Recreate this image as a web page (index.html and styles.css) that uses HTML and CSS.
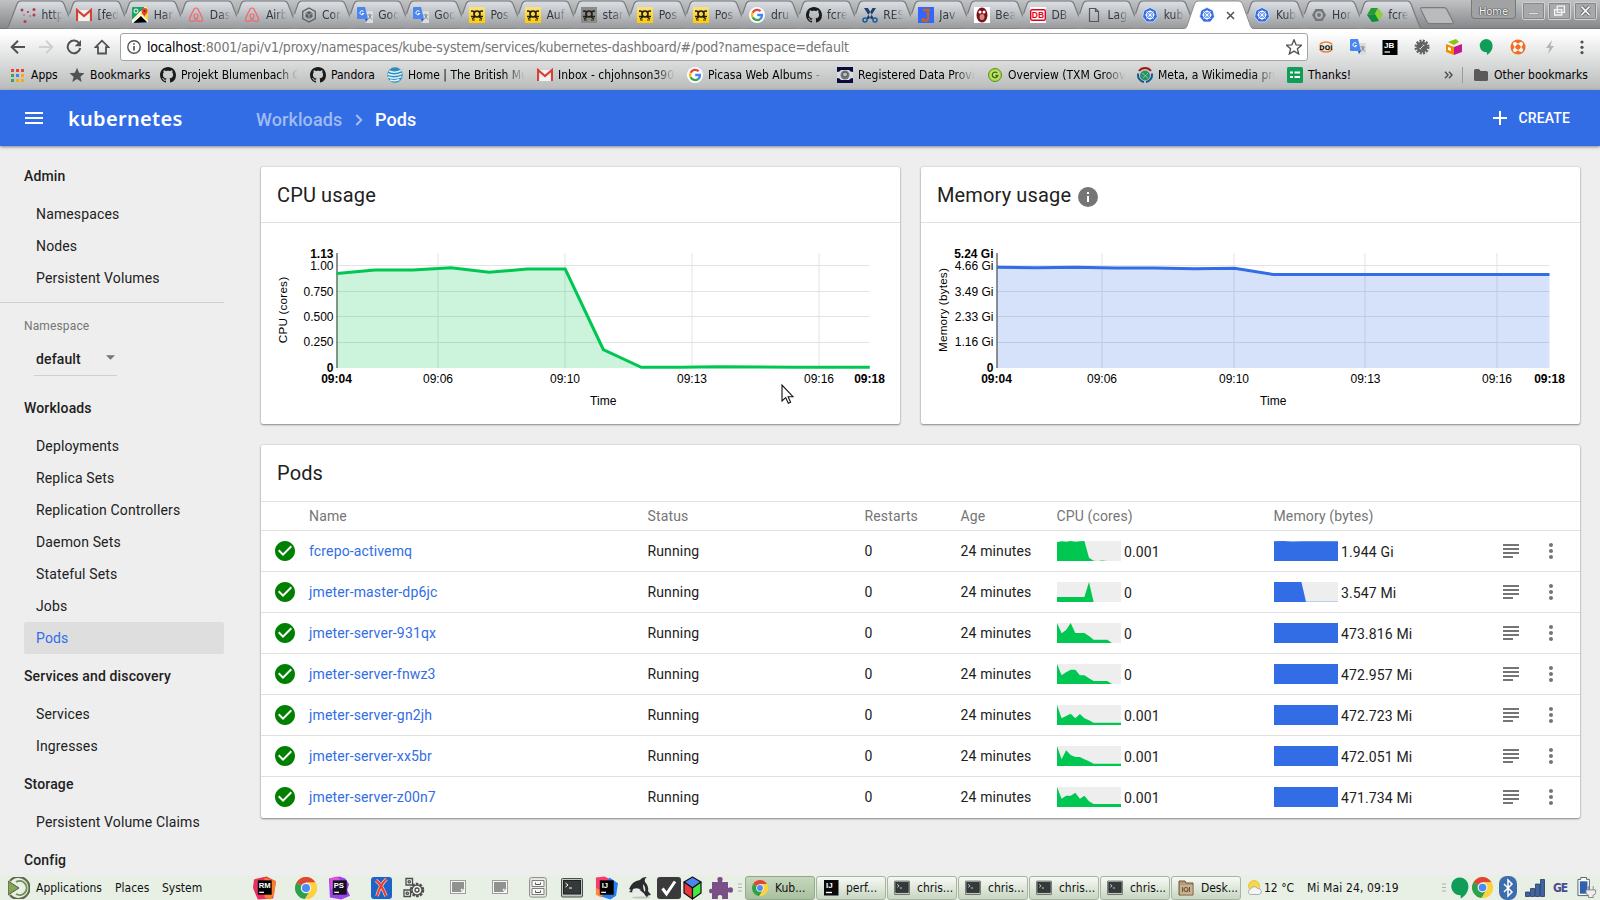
FILE: index.html
```html
<!DOCTYPE html>
<html lang="en">
<head>
<meta charset="utf-8">
<title>Pods - Kubernetes Dashboard</title>
<link rel="stylesheet" href="styles.css">
</head>
<body>
<svg class="defs" width="0" height="0">
  <defs>
    <linearGradient id="gTab" x1="0" y1="0" x2="0" y2="1"><stop offset="0" stop-color="#d6dade"/><stop offset=".1" stop-color="#d6dadf"/><stop offset="1" stop-color="#97999b"/></linearGradient>
    <linearGradient id="gDhl" x1="0" y1="0" x2="0" y2="1"><stop offset="0" stop-color="#fbe27c"/><stop offset="1" stop-color="#fc0"/></linearGradient>
  </defs>
  <symbol id="tab" viewBox="0 0 70 29"><path d="M7 15 L11 4 Q12 1 15 1 H54 Q57 1 58 4 L66.500 26 Q67.500 28.500 70 28.500 H3.500Z" fill="url(#gTab)"/><path d="M7.500 14 L11 4 Q12 1 15 1 H54 Q57 1 58 4 L66.500 26 Q67.500 28.500 70 28.500" fill="none" stroke="#797b7d" stroke-width="1.200"/></symbol>
  <symbol id="tab-first" viewBox="0 0 70 29"><path d="M0 28.500 Q2 28 3 25 L11 4 Q12 1 15 1 H54 Q57 1 58 4 L66.500 26 Q67.500 28.500 70 28.500" fill="url(#gTab)" stroke="#797b7d" stroke-width="1.200"/></symbol>
  <symbol id="tab-active" viewBox="0 0 70 29"><path d="M0 29 Q2 28.500 3 26 L10.500 4 Q11.500 1 14 1 H54.500 Q57.500 1 58.500 4 L66.500 26 Q67.500 28.500 69.500 29" fill="#fff" stroke="#8c8e90"/></symbol>
  <symbol id="dots" viewBox="0 0 16 16"><g fill="#b8384a"><circle cx="2" cy="3" r="1.500"/><circle cx="8" cy="5" r="1.100"/><circle cx="14" cy="2.500" r="1.500"/><circle cx="14" cy="8" r="1.500"/><circle cx="5" cy="14.500" r="1.500"/><circle cx="10" cy="9" r=".7"/><circle cx="4" cy="8" r=".7"/></g></symbol>
  <symbol id="gmail" viewBox="0 0 16 16"><path d="M1 3h14v11H1z" fill="#f2f2f2"/><path d="M1 14V3l7 6 7-6v11" fill="none" stroke="#d93f32" stroke-width="2.200"/></symbol>
  <symbol id="maps" viewBox="0 0 16 16"><rect width="16" height="16" rx="1" fill="#1ea362"/><path d="M0 13L13 0h3v16H0z" fill="#fdd835"/><path d="M3 16l6-6 7 6z" fill="#4285f4"/><path d="M0 14L14 0M0 16l9-8 7 7" stroke="#fff" stroke-width="1.500"/><path d="M12.500 10c0-2-3-3-3-6a3 3 0 0 1 6 0c0 3-3 4-3 6z" fill="#db4437"/><circle cx="12.500" cy="4" r="1" fill="#7b231e"/><circle cx="4" cy="4" r="2" fill="none" stroke="#fff"/></symbol>
  <symbol id="airbnb" viewBox="0 0 16 16"><path d="M8 12.500C5 9.500 5.500 7 8 7s3 2.500 0 5.500c-3 3-6.800 2.500-6.500-.5C1.700 10.500 6 2 6.500 1.500 7 .8 9 .8 9.500 1.500 10 2 14.300 10.500 14.500 12c.3 3-3.500 3.500-6.500.5z" fill="none" stroke="#f4676b" stroke-width="1.200"/></symbol>
  <symbol id="hexgrey" viewBox="0 0 16 16"><path d="M8 1l6.300 3.500v7L8 15l-6.300-3.500v-7z" fill="none" stroke="#5c5f61" stroke-width="1.300"/><path d="M8 4l3.500 2v4L8 12l-3.500-2V6z" fill="#5c5f61"/><path d="M4.500 6L8 8l3.500-2M8 8v4" stroke="#bbb" stroke-width=".7" fill="none"/></symbol>
  <symbol id="gtrans" viewBox="0 0 16 16"><path d="M6 4h10v12H9z" fill="#dcdcdc"/><path d="M0 1q0-1 1-1h7l3 12H1q-1 0-1-1z" fill="#4a86ef"/><path d="M8 12h3l-2 3z" fill="#2257c4"/><path d="M6.500 4.500a2 2 0 1 0 .3 2H5" fill="none" stroke="#fff"/><path d="M10.500 8h4M12.500 7v1M14 8q-.5 3-3 4M12 9l3 3.500" fill="none" stroke="#687b8a" stroke-width=".8"/></symbol>
  <symbol id="horn" viewBox="0 0 16 16"><path d="M2 4.200Q5 3.500 6 6M14 4.200Q11 3.500 10 6M2 9.500h4M10 9.500h4M6 10l-3 2M10 10l3 2" stroke="#231f12" stroke-width="1.400" fill="none"/><circle cx="8" cy="7" r="3" fill="none" stroke="#231f12" stroke-width="1.700"/><path d="M3 13h3M10 13h3" stroke="#231f12" stroke-width=".9"/></symbol>
  <symbol id="dhl" viewBox="0 0 16 16"><rect width="16" height="16" fill="url(#gDhl)"/><use href="#horn"/></symbol>
  <symbol id="dhlgrey" viewBox="0 0 16 16"><rect width="16" height="16" fill="#8b8b8b"/><use href="#horn"/></symbol>
  <symbol id="google" viewBox="0 0 16 16"><circle cx="8" cy="8" r="8" fill="#fff"/><g fill="none" stroke-width="2.300"><path d="M11.600 4.200A5 5 0 0 0 3.600 5.700" stroke="#ea4335"/><path d="M3.600 5.700a5 5 0 0 0 0 4.600" stroke="#fbbc05"/><path d="M3.600 10.300a5 5 0 0 0 7.800 1.500" stroke="#34a853"/><path d="M11.400 11.800A5 5 0 0 0 13 8H8.200" stroke="#4285f4"/></g></symbol>
  <symbol id="github" viewBox="0 0 16 16"><path fill="#1b1b1b" d="M8 0C3.580 0 0 3.580 0 8c0 3.540 2.290 6.530 5.470 7.590.4.070.55-.17.55-.38 0-.19-.01-.82-.01-1.490-2.010.37-2.530-.49-2.690-.94-.09-.23-.48-.94-.82-1.130-.28-.15-.68-.52-.01-.53.63-.01 1.080.58 1.230.82.72 1.210 1.870.87 2.330.66.07-.52.28-.87.51-1.070-1.780-.2-3.640-.89-3.640-3.950 0-.87.31-1.590.82-2.150-.08-.2-.36-1.020.08-2.120 0 0 .67-.21 2.200.82.64-.18 1.320-.27 2-.27s1.360.09 2 .27c1.530-1.040 2.200-.82 2.200-.82.44 1.100.16 1.920.08 2.120.51.56.82 1.270.82 2.150 0 3.070-1.870 3.750-3.650 3.950.29.25.54.73.54 1.480 0 1.070-.01 1.930-.01 2.200 0 .21.15.46.55.38A8.010 8.010 0 0 0 16 8c0-4.420-3.580-8-8-8z"/></symbol>
  <symbol id="scissors" viewBox="0 0 16 16"><path d="M2 1h4l6 11H9zM14 1h-3.500L4 12h3z" fill="#1c3f6e"/><g fill="none" stroke="#1c5c9c" stroke-width="1.500"><circle cx="3" cy="13" r="2"/><circle cx="13" cy="13" r="2"/></g></symbol>
  <symbol id="java" viewBox="0 0 16 16"><rect width="16" height="16" fill="#36f"/><path d="M5 3h7M10 3v9q0 1.500-1.500 1.500H5V11" stroke="#c9641e" stroke-width="2.400" fill="none"/></symbol>
  <symbol id="bean" viewBox="0 0 16 16"><rect width="16" height="16" fill="#fff"/><ellipse cx="8" cy="8" rx="5.500" ry="7.500" fill="#7a1218"/><ellipse cx="8" cy="10" rx="2.500" ry="3" fill="#cf8b80"/><circle cx="6" cy="5" r="1.500" fill="#fff"/><circle cx="10" cy="5" r="1.500" fill="#fff"/></symbol>
  <symbol id="db" viewBox="0 0 16 16"><rect width="16" height="16" fill="#fff"/><rect x=".7" y="2.700" width="14.600" height="10.600" rx="1.500" fill="#fff" stroke="#e3001b" stroke-width="1.400"/><text x="8" y="11.200" text-anchor="middle" class="db-text">DB</text></symbol>
  <symbol id="page" viewBox="0 0 16 16"><path d="M3.500 1.500h6l3 3v10h-9zM9.500 1.500v3h3" fill="none" stroke="#55575a" stroke-width="1.200"/></symbol>
  <symbol id="kube" viewBox="0 0 16 16"><path d="M8 .5l5.900 2.900 1.500 6.400-4.100 5.100H4.700L.6 9.800l1.500-6.400z" fill="#326de6" stroke="#e9effb" stroke-width=".7"/><g fill="none" stroke="#fff"><circle cx="8" cy="8" r="3.600" stroke-width="1.100"/><path d="M8 3v10M3 8h10M4.400 4.400l7.200 7.200M11.600 4.400l-7.200 7.200" stroke-width=".8"/></g></symbol>
  <symbol id="hexhole" viewBox="0 0 16 16"><path d="M4.500 2h7L15 8l-3.500 6h-7L1 8z" fill="#747779"/><circle cx="8" cy="8" r="3.800" fill="#b7b9bb"/><circle cx="8" cy="8" r="2" fill="#747779"/></symbol>
  <symbol id="fedora" viewBox="0 0 16 16"><path d="M4 1l7 0-3 6-8 1z" fill="#2a9a35"/><path d="M11 1l5 6-4 7-4-7z" fill="#8bd03a"/><path d="M0 8l8-1 4 7-7 1z" fill="#0b8d3b"/></symbol>
  <symbol id="att" viewBox="0 0 16 16"><circle cx="8" cy="8" r="7.700" fill="#2d8cb9"/><g stroke="#dff1f8" fill="none" stroke-width="1.500"><path d="M2 4q6 2.500 12-.5M.8 7q7 2.500 14-.5M1 10q7 2.500 13.500-.5M3 13q5 1.500 9.500-.5"/></g></symbol>
  <symbol id="reg" viewBox="0 0 16 16"><rect width="16" height="16" fill="#0b0b3b"/><path d="M0 5q3 0 4-2h8q1 2 4 2v6q-3 0-4 2H4q-1-2-4-2z" fill="#d9dce0"/><circle cx="8" cy="8" r="4.500" fill="#777"/><circle cx="8" cy="7.500" r="2.500" fill="#bbb" stroke="#555"/></symbol>
  <symbol id="groovy" viewBox="0 0 16 16"><circle cx="8" cy="8" r="6.500" fill="#a5d63f" stroke="#5f8f1f"/><circle cx="8" cy="8" r="4.800" fill="#c4e670"/><path d="M10.300 6.200A2.800 2.800 0 1 0 10.800 8.500H8.300" fill="none" stroke="#426b12" stroke-width="1.400"/></symbol>
  <symbol id="meta" viewBox="0 0 16 16"><circle cx="8" cy="8.500" r="5" fill="#2d9168"/><path d="M5 6l6 5M6 11l5-5" stroke="#8bd3ac" stroke-width=".8"/><path d="M2 4a7.500 7.500 0 0 1 12 0" fill="none" stroke="#a3161a" stroke-width="2"/><path d="M1.200 6.500A7 7 0 0 0 7 15M14.800 6.500A7 7 0 0 1 9 15" fill="none" stroke="#0c5a93" stroke-width="2"/></symbol>
  <symbol id="sheet" viewBox="0 0 16 16"><rect width="16" height="16" rx="1.500" fill="#0f9d58"/><path d="M3 5.500h3M7.500 5.500H13M3 10h3M7.500 10H13" stroke="#fff" stroke-width="1.800"/></symbol>
  <symbol id="folder" viewBox="0 0 16 16"><path d="M1 3.500Q1 2 2.500 2H6l1.500 2h6Q15 4 15 5.500v7q0 1.500-1.500 1.500h-11Q1 14 1 12.500z" fill="#5a5a5a"/></symbol>
  <symbol id="star" viewBox="0 0 16 16"><path d="M8 .8l2.100 5 5.400.4-4.100 3.500 1.300 5.300L8 12.100 3.300 15l1.300-5.300L.5 6.200l5.400-.4z"/></symbol>
  <symbol id="appsgrid" viewBox="0 0 13 13"><path d="M0 0h3v3H0zM5 0h3v3H5zM10 0h3v3h-3z" fill="#ea4335"/><path d="M0 5h3v3H0zM0 10h3v3H0z" fill="#34a853"/><path d="M5 5h3v3H5z" fill="#4285f4"/><path d="M10 5h3v3h-3zM5 10h3v3H5zM10 10h3v3h-3z" fill="#fbab05"/></symbol>
  <symbol id="hangouts" viewBox="0 0 16 18"><path d="M8 0a7.500 7.500 0 0 1 7.500 7.500C15.500 12 13 15.500 9 18v-3A7.500 7.500 0 1 1 8 0z" fill="#0f9d58"/></symbol>
  <symbol id="chrome" viewBox="0 0 22 22"><circle cx="11" cy="11" r="11" fill="#fdd23c"/><path d="M11 11L1.500 5.500A11 11 0 0 1 20.500 5.500H11z" fill="#df4538"/><path d="M1.500 5.500A11 11 0 0 0 10 22l5-8.500-4-2.500z" fill="#2da14f"/><path d="M20.500 5.500H11v5.500l4 3-5 8A11 11 0 0 0 20.500 5.500z" fill="#fdd23c"/><circle cx="11" cy="11" r="5.200" fill="#f5f5f5"/><circle cx="11" cy="11" r="4" fill="#4b8bf5"/></symbol>
  <symbol id="terminal" viewBox="0 0 22 20"><rect x=".5" y=".5" width="21" height="18.500" rx="1" fill="#c3c5c0" stroke="#4c4e4a"/><rect x="2.500" y="2.500" width="17" height="13.500" fill="#343a3a" stroke="#1d2121"/><path d="M4.500 5l2.500 2-2.500 2M8 10h3" stroke="#fff" fill="none"/></symbol>
  <symbol id="note" viewBox="0 0 16 15"><rect x=".5" y=".5" width="15" height="13" fill="#f8f8f8" stroke="#9b9e9a"/><path d="M2 2h12v6.500L11 12H2z" fill="#90928f"/><path d="M10.500 12V8.500H14z" fill="#fff" stroke="#777" stroke-width=".5"/></symbol>
  <symbol id="check" viewBox="0 0 24 24"><path fill="green" d="M12 2C6.480 2 2 6.480 2 12s4.480 10 10 10 10-4.480 10-10S17.520 2 12 2zm-2 15l-5-5 1.410-1.410L10 14.170l7.590-7.590L19 8l-9 9z"/></symbol>
  <symbol id="subject" viewBox="0 0 24 24"><path fill="#757575" d="M14 17H4v2h10v-2zm6-8H4v2h16V9zM4 15h16v-2H4v2zM4 5v2h16V5H4z"/></symbol>
  <symbol id="more" viewBox="0 0 24 24"><path fill="#757575" d="M12 8c1.100 0 2-.9 2-2s-.9-2-2-2-2 .9-2 2 .9 2 2 2zm0 2c-1.100 0-2 .9-2 2s.9 2 2 2 2-.9 2-2-.9-2-2-2zm0 6c-1.100 0-2 .9-2 2s.9 2 2 2 2-.9 2-2-.9-2-2-2z"/></symbol>
</svg>

<div class="browser">
  <div class="tabstrip">
    <div class="tab"><svg class="shape"><use href="#tab-first"/></svg><svg class="fav"><use href="#dots"/></svg><span>http</span></div>
    <div class="tab"><svg class="shape"><use href="#tab"/></svg><svg class="fav"><use href="#gmail"/></svg><span>[fed</span></div>
    <div class="tab"><svg class="shape"><use href="#tab"/></svg><svg class="fav"><use href="#maps"/></svg><span>Har</span></div>
    <div class="tab"><svg class="shape"><use href="#tab"/></svg><svg class="fav"><use href="#airbnb"/></svg><span>Das</span></div>
    <div class="tab"><svg class="shape"><use href="#tab"/></svg><svg class="fav"><use href="#airbnb"/></svg><span>Airb</span></div>
    <div class="tab"><svg class="shape"><use href="#tab"/></svg><svg class="fav"><use href="#hexgrey"/></svg><span>Cor</span></div>
    <div class="tab"><svg class="shape"><use href="#tab"/></svg><svg class="fav"><use href="#gtrans"/></svg><span>Goo</span></div>
    <div class="tab"><svg class="shape"><use href="#tab"/></svg><svg class="fav"><use href="#gtrans"/></svg><span>Goo</span></div>
    <div class="tab"><svg class="shape"><use href="#tab"/></svg><svg class="fav"><use href="#dhl"/></svg><span>Pos</span></div>
    <div class="tab"><svg class="shape"><use href="#tab"/></svg><svg class="fav"><use href="#dhl"/></svg><span>Auf</span></div>
    <div class="tab"><svg class="shape"><use href="#tab"/></svg><svg class="fav"><use href="#dhlgrey"/></svg><span>star</span></div>
    <div class="tab"><svg class="shape"><use href="#tab"/></svg><svg class="fav"><use href="#dhl"/></svg><span>Pos</span></div>
    <div class="tab"><svg class="shape"><use href="#tab"/></svg><svg class="fav"><use href="#dhl"/></svg><span>Pos</span></div>
    <div class="tab"><svg class="shape"><use href="#tab"/></svg><svg class="fav"><use href="#google"/></svg><span>dru</span></div>
    <div class="tab"><svg class="shape"><use href="#tab"/></svg><svg class="fav"><use href="#github"/></svg><span>fcre</span></div>
    <div class="tab"><svg class="shape"><use href="#tab"/></svg><svg class="fav"><use href="#scissors"/></svg><span>RES</span></div>
    <div class="tab"><svg class="shape"><use href="#tab"/></svg><svg class="fav"><use href="#java"/></svg><span>Jav</span></div>
    <div class="tab"><svg class="shape"><use href="#tab"/></svg><svg class="fav"><use href="#bean"/></svg><span>Bea</span></div>
    <div class="tab"><svg class="shape"><use href="#tab"/></svg><svg class="fav"><use href="#db"/></svg><span>DB</span></div>
    <div class="tab"><svg class="shape"><use href="#tab"/></svg><svg class="fav"><use href="#page"/></svg><span>Lag</span></div>
    <div class="tab"><svg class="shape"><use href="#tab"/></svg><svg class="fav"><use href="#kube"/></svg><span>kub</span></div>
    <div class="tab active"><svg class="shape"><use href="#tab-active"/></svg><svg class="fav"><use href="#kube"/></svg><svg class="tab-close" viewBox="0 0 9 9"><path d="M1 1l7 7M8 1L1 8" stroke="#505254" stroke-width="1.500"/></svg></div>
    <div class="tab"><svg class="shape"><use href="#tab"/></svg><svg class="fav"><use href="#kube"/></svg><span>Kub</span></div>
    <div class="tab"><svg class="shape"><use href="#tab"/></svg><svg class="fav"><use href="#hexhole"/></svg><span>Hor</span></div>
    <div class="tab"><svg class="shape"><use href="#tab"/></svg><svg class="fav"><use href="#fedora"/></svg><span>fcre</span></div>
    <svg class="newtab" viewBox="0 0 36 18"><path d="M3 .7h22q2 0 3 2l6 12q1 2-1 2H11q-2 0-3-2L2 3Q1 .7 3 .7z" fill="#b9bbbd" stroke="#7a7c7e" stroke-width="1.200"/></svg>
    <div class="wm">
      <div class="wm-home">Home</div>
      <svg class="wm-btn" viewBox="0 0 23 18"><path d="M6 11h11v2H6z" fill="#f4f4f4" stroke="#77797a" stroke-width=".6"/></svg>
      <svg class="wm-btn" viewBox="0 0 23 18"><path d="M9 3.500h8v7H9zM6 7.500h8v6H6z" fill="#a9abad" stroke="#f4f4f4" stroke-width="1.500"/></svg>
      <svg class="wm-btn" viewBox="0 0 23 18"><path d="M7 4l9 9.500M16 4l-9 9.500" stroke="#696b6d" stroke-width="4"/><path d="M7 4l9 9.500M16 4l-9 9.500" stroke="#f4f4f4" stroke-width="2"/></svg>
    </div>
  </div>

  <div class="toolbar">
    <svg class="nav" viewBox="0 0 16 16"><path d="M15 8H2M8 1.700L1.700 8 8 14.300" fill="none" stroke="#505254" stroke-width="2"/></svg>
    <svg class="nav" viewBox="0 0 16 16"><path d="M1 8h13M8 1.700L14.300 8 8 14.300" fill="none" stroke="#d0d0d0" stroke-width="2"/></svg>
    <svg class="nav" viewBox="0 0 16 16"><path d="M13.300 4.500A6.300 6.300 0 1 0 14.200 9" fill="none" stroke="#505254" stroke-width="2"/><path d="M15 1v6.300H8.700z" fill="#505254"/></svg>
    <svg class="nav" viewBox="0 0 16 16"><path d="M8 1.700L1.500 8.200H4v6.300h8V8.200h2.500z" fill="none" stroke="#505254" stroke-width="1.800"/></svg>
    <div class="omnibox">
      <svg class="site-info" viewBox="0 0 14 14"><circle cx="7" cy="7" r="6.200" fill="none" stroke="#555" stroke-width="1.400"/><path d="M7 6v4.500M7 3.200v1.600" stroke="#555" stroke-width="1.700"/></svg>
      <span class="url"><b>localhost</b>:8001/api/v1/proxy/namespaces/kube-system/services/kubernetes-dashboard/#/pod?namespace=default</span>
      <svg class="fav outline"><use href="#star"/></svg>
    </div>
    <div class="extensions">
      <svg viewBox="0 0 16 16"><ellipse cx="8" cy="8" rx="7" ry="5" fill="none" stroke="#f0823c" stroke-width="1.700"/><rect y="5.500" width="16" height="5" fill="#e8f0e0"/><text x="8" y="10.700" text-anchor="middle" class="doi-text">DOI</text></svg>
      <svg><use href="#gtrans"/></svg>
      <svg viewBox="0 0 16 16"><rect x=".5" y="1" width="15" height="15" fill="#000"/><text x="2" y="8.500" class="jb-text">JB</text><path d="M2.500 13h5.500" stroke="#fff" stroke-width="1.200"/></svg>
      <svg viewBox="0 0 16 16"><circle cx="8" cy="8" r="6" fill="none" stroke="#5f6163" stroke-width="3" stroke-dasharray="1.900 1.240"/><circle cx="8" cy="8" r="5.500" fill="#5f6163"/><path d="M10 6l-4 4M9 5.500l1.500 1.500M5.500 9L7 10.500" stroke="#d8d8d8"/></svg>
      <svg viewBox="0 0 16 16"><path d="M0 5l8 3v8l-8-3z" fill="#f38b00"/><path d="M16 5L8 8v8l8-3z" fill="#c6168d"/><path d="M2 3l8-3 3 3-5 3z" fill="#8ac510"/><path d="M2 8l3 1v3l-3-1z" fill="#fff"/></svg>
      <svg viewBox="0 0 16 18"><use href="#hangouts"/></svg>
      <svg viewBox="0 0 16 16"><circle cx="8" cy="8" r="7.500" fill="#f26d21"/><g fill="#fff"><circle cx="5" cy="5" r="2"/><circle cx="11" cy="5" r="2"/><circle cx="5" cy="11" r="2"/><circle cx="11" cy="11" r="2"/></g><circle cx="8" cy="8" r="3.300" fill="none" stroke="#fff"/><circle cx="8" cy="8" r="2.300" fill="#f26d21"/></svg>
      <svg viewBox="0 0 16 16"><path d="M10 1L4 9h3.500L6 15l6-8H8.500z" fill="#b4b4b4"/></svg>
      <svg viewBox="0 0 16 16"><g fill="#505254"><circle cx="8" cy="3" r="1.600"/><circle cx="8" cy="8.300" r="1.600"/><circle cx="8" cy="13.600" r="1.600"/></g></svg>
    </div>
  </div>

  <div class="bookmarks">
    <div class="bm"><svg class="fav small"><use href="#appsgrid"/></svg><span class="w-apps">Apps</span></div>
    <div class="bm"><svg class="fav solid"><use href="#star"/></svg><span class="w-books">Bookmarks</span></div>
    <div class="bm"><svg class="fav"><use href="#github"/></svg><span class="fade">Projekt Blumenbach C</span></div>
    <div class="bm"><svg class="fav"><use href="#github"/></svg><span class="w-pandora">Pandora</span></div>
    <div class="bm"><svg class="fav"><use href="#att"/></svg><span class="fade">Home | The British Mu</span></div>
    <div class="bm"><svg class="fav"><use href="#gmail"/></svg><span class="fade">Inbox - chjohnson390</span></div>
    <div class="bm"><svg class="fav"><use href="#google"/></svg><span class="fade">Picasa Web Albums -</span></div>
    <div class="bm"><svg class="fav"><use href="#reg"/></svg><span class="fade">Registered Data Provid</span></div>
    <div class="bm"><svg class="fav"><use href="#groovy"/></svg><span class="fade">Overview (TXM Groov</span></div>
    <div class="bm"><svg class="fav"><use href="#meta"/></svg><span class="fade">Meta, a Wikimedia pro</span></div>
    <div class="bm"><svg class="fav"><use href="#sheet"/></svg><span>Thanks!</span></div>
    <svg class="chevrons" viewBox="0 0 9 8"><path d="M1 .7L4 4 1 7.300M5 .7L8 4 5 7.300" fill="none" stroke="#505254" stroke-width="1.500"/></svg>
    <i class="bm-sep"></i>
    <div class="bm last"><svg class="fav"><use href="#folder"/></svg><span>Other bookmarks</span></div>
  </div>
</div>

<header class="appbar">
  <svg class="burger" viewBox="0 0 18 12"><path d="M0 1h18M0 6h18M0 11h18" stroke="#fff" stroke-width="2"/></svg>
  <div class="brand">kubernetes</div>
  <nav class="crumbs"><a>Workloads</a><svg viewBox="0 0 8 12"><path d="M1.300 1L6.300 6l-5 5" fill="none" stroke="#a9c1f4" stroke-width="1.800"/></svg><span>Pods</span></nav>
  <div class="create"><svg viewBox="0 0 14 14"><path d="M7 0v14M0 7h14" stroke="#fff" stroke-width="2"/></svg><span>CREATE</span></div>
</header>

<div class="body">
  <aside class="side">
    <h4>Admin</h4>
    <a>Namespaces</a><a>Nodes</a><a>Persistent Volumes</a>
    <hr>
    <label>Namespace</label>
    <div class="select"><span>default</span><svg viewBox="0 0 10 5"><path d="M0 0h10L5 5z" fill="#757575"/></svg></div>
    <h4>Workloads</h4>
    <a>Deployments</a><a>Replica Sets</a><a>Replication Controllers</a><a>Daemon Sets</a><a>Stateful Sets</a><a>Jobs</a><a class="on">Pods</a>
    <h4>Services and discovery</h4>
    <a>Services</a><a>Ingresses</a>
    <h4>Storage</h4>
    <a>Persistent Volume Claims</a>
    <h4>Config</h4>
  </aside>

  <main class="content">
    <div class="charts">
      <section class="card">
        <h2>CPU usage</h2>
        <svg class="chart" viewBox="260.500 223 639 201">
          <path class="grid" d="M336 265.500H869M336 291.500H869M336 316.500H869M336 342.500H869M437.500 253V368M564.500 253V368M691.500 253V368M818.500 253V368"/>
          <path class="axis" d="M336.500 253V368"/>
          <path class="area-cpu" d="M336.300 273.500L374.400 270L412.400 270L450.500 267.700L488.600 272.300L526.600 269L564.700 269L602.800 349.500L640.800 367.300L679 367.300L717 366.700L793 367.300L869.300 367.300V368H336.300Z"/>
          <path class="line-cpu" d="M336.300 273.500L374.400 270L412.400 270L450.500 267.700L488.600 272.300L526.600 269L564.700 269L602.800 349.500L640.800 367.300L679 367.300L717 366.700L793 367.300L869.300 367.300"/>
          <g class="ylab"><text class="b" x="333" y="257.500">1.13</text><text x="333" y="270">1.00</text><text x="333" y="295.500">0.750</text><text x="333" y="321">0.500</text><text x="333" y="346">0.250</text><text class="b" x="333" y="372">0</text></g>
          <g class="xlab"><text class="b" x="336" y="382.500">09:04</text><text x="437.500" y="382.500">09:06</text><text x="564.500" y="382.500">09:10</text><text x="691.500" y="382.500">09:13</text><text x="818.500" y="382.500">09:16</text><text class="b" x="869" y="382.500">09:18</text><text x="602.700" y="404.500">Time</text><text class="rot" transform="translate(286 310) rotate(-90)">CPU (cores)</text></g>
        </svg>
      </section>
      <section class="card">
        <h2>Memory usage <svg class="info" viewBox="0 0 20 20"><circle cx="10" cy="10" r="10" fill="#757575"/><path d="M9 9h2v6H9zM9 5h2v2H9z" fill="#fff"/></svg></h2>
        <svg class="chart" viewBox="920.500 223 659 201">
          <path class="grid" d="M996 265.500H1549M996 291.500H1549M996 316.500H1549M996 342.500H1549M1101.500 253V368M1233.500 253V368M1364.500 253V368M1496.500 253V368"/>
          <path class="axis" d="M996.500 253V368"/>
          <path class="area-mem" d="M996.500 267.300L1036 267.700L1075 267.300L1115 268L1154 268L1194 268.700L1234 268.300L1272.700 274.400H1549V368H996.500Z"/>
          <path class="line-mem" d="M996.500 267.300L1036 267.700L1075 267.300L1115 268L1154 268L1194 268.700L1234 268.300L1272.700 274.400H1549"/>
          <g class="ylab"><text class="b" x="993" y="257.500">5.24 Gi</text><text x="993" y="270">4.66 Gi</text><text x="993" y="295.500">3.49 Gi</text><text x="993" y="321">2.33 Gi</text><text x="993" y="346">1.16 Gi</text><text class="b" x="993" y="372">0</text></g>
          <g class="xlab"><text class="b" x="996" y="382.500">09:04</text><text x="1101.500" y="382.500">09:06</text><text x="1233.500" y="382.500">09:10</text><text x="1365" y="382.500">09:13</text><text x="1496.500" y="382.500">09:16</text><text class="b" x="1549" y="382.500">09:18</text><text x="1272.700" y="404.500">Time</text><text class="rot" transform="translate(946 310) rotate(-90)">Memory (bytes)</text></g>
        </svg>
      </section>
    </div>

    <section class="card pods">
      <h2>Pods</h2>
      <div class="row head"><i></i><span>Name</span><span>Status</span><span>Restarts</span><span>Age</span><span>CPU (cores)</span><span>Memory (bytes)</span></div>
      <div class="row"><svg class="ic"><use href="#check"/></svg><a>fcrepo-activemq</a><span>Running</span><span>0</span><span>24 minutes</span>
        <div class="metric"><svg class="spark cpu" viewBox="0 0 64 20"><path d="M0 1.300L4.600.3 9.100.7 13.700 0 18.300.7 22.900.3 27.400 0 32 16.700 36.600 19.700 41 20 45.500 19.600 50 20H0z"/></svg>0.001</div>
        <div class="metric"><svg class="spark mem" viewBox="0 0 64 20"><path d="M0 .3L9 0 18 .6 30 .3H64V20H0z"/></svg>1.944 Gi</div><svg class="ic"><use href="#subject"/></svg><svg class="ic"><use href="#more"/></svg></div>
      <div class="row"><svg class="ic"><use href="#check"/></svg><a>jmeter-master-dp6jc</a><span>Running</span><span>0</span><span>24 minutes</span>
        <div class="metric"><svg class="spark cpu" viewBox="0 0 64 20"><path d="M0 15H27.400L32 0 36.600 20H0z"/></svg>0</div>
        <div class="metric"><svg class="spark mem" viewBox="0 0 64 20"><path d="M0 0H27.400L32 19.700H64V20H0z"/></svg>3.547 Mi</div><svg class="ic"><use href="#subject"/></svg><svg class="ic"><use href="#more"/></svg></div>
      <div class="row"><svg class="ic"><use href="#check"/></svg><a>jmeter-server-931qx</a><span>Running</span><span>0</span><span>24 minutes</span>
        <div class="metric"><svg class="spark cpu" viewBox="0 0 64 20"><path d="M0 0L4.600 10.300 9.100 7 13.700 0 18.300 10H27.400L32 13 36.600 16.700H50.300L54.900 20H0z"/></svg>0</div>
        <div class="metric"><svg class="spark mem" viewBox="0 0 64 20"><path d="M0 0H64V20H0z"/></svg>473.816 Mi</div><svg class="ic"><use href="#subject"/></svg><svg class="ic"><use href="#more"/></svg></div>
      <div class="row"><svg class="ic"><use href="#check"/></svg><a>jmeter-server-fnwz3</a><span>Running</span><span>0</span><span>24 minutes</span>
        <div class="metric"><svg class="spark cpu" viewBox="0 0 64 20"><path d="M0 0L4.600 11.300 9.100 8.300 13.700 5.700H18.300L22.900 11.300H27.400L32 14.300 36.600 17H50.300L54.900 20H0z"/></svg>0</div>
        <div class="metric"><svg class="spark mem" viewBox="0 0 64 20"><path d="M0 0H64V20H0z"/></svg>472.957 Mi</div><svg class="ic"><use href="#subject"/></svg><svg class="ic"><use href="#more"/></svg></div>
      <div class="row"><svg class="ic"><use href="#check"/></svg><a>jmeter-server-gn2jh</a><span>Running</span><span>0</span><span>24 minutes</span>
        <div class="metric"><svg class="spark cpu" viewBox="0 0 64 20"><path d="M0 0L4.600 13.300 9.100 11 13.700 8.700 18.300 13.300 22.900 9 27.400 13.300 32 15.300 36.600 17.700H64V20H0z"/></svg>0.001</div>
        <div class="metric"><svg class="spark mem" viewBox="0 0 64 20"><path d="M0 0H64V20H0z"/></svg>472.723 Mi</div><svg class="ic"><use href="#subject"/></svg><svg class="ic"><use href="#more"/></svg></div>
      <div class="row"><svg class="ic"><use href="#check"/></svg><a>jmeter-server-xx5br</a><span>Running</span><span>0</span><span>24 minutes</span>
        <div class="metric"><svg class="spark cpu" viewBox="0 0 64 20"><path d="M0 0L4.600 13.300 9.100 4.300 13.700 9 18.300 11H22.900L27.400 13.300 32 15.300 36.600 17.700H64V20H0z"/></svg>0.001</div>
        <div class="metric"><svg class="spark mem" viewBox="0 0 64 20"><path d="M0 0H64V20H0z"/></svg>472.051 Mi</div><svg class="ic"><use href="#subject"/></svg><svg class="ic"><use href="#more"/></svg></div>
      <div class="row"><svg class="ic"><use href="#check"/></svg><a>jmeter-server-z00n7</a><span>Running</span><span>0</span><span>24 minutes</span>
        <div class="metric"><svg class="spark cpu" viewBox="0 0 64 20"><path d="M0 0L4.600 11.700 9.100 8.700H13.700L18.300 5.700 22.900 11.700 27.400 8.700 32 14.300 36.600 17H64V20H0z"/></svg>0.001</div>
        <div class="metric"><svg class="spark mem" viewBox="0 0 64 20"><path d="M0 0H64V20H0z"/></svg>471.734 Mi</div><svg class="ic"><use href="#subject"/></svg><svg class="ic"><use href="#more"/></svg></div>
    </section>
  </main>
</div>

<footer class="panel">
  <svg class="mate" viewBox="0 0 22 22"><path d="M2 4A11 11 0 1 1 2 18" fill="none" stroke="#5d6b4a" stroke-width="2.200"/><path d="M8 5a7 7 0 1 1 0 12" fill="none" stroke="#75915a" stroke-width="2"/><path d="M0 4l11 7-11 7z" fill="#87a556" stroke="#4d5b3a"/></svg>
  <span class="menu m1">Applications</span><span class="menu m2">Places</span><span class="menu m3">System</span>
  <div class="launchers">
    <svg class="l1" viewBox="0 0 24 24"><path d="M1 3L14 0l10 5-3 18L5 24 0 12z" fill="#e8305f"/><path d="M12 1l12 4-2 14-4 5-6-2z" fill="#f97f2b"/><rect x="5" y="4" width="14.500" height="15" fill="#000"/><text x="6" y="11.500" class="jb-text">RM</text><path d="M6.500 16.500h5" stroke="#fff" stroke-width="1.300"/></svg>
    <svg class="l2"><use href="#chrome"/></svg>
    <svg class="l3" viewBox="0 0 24 24"><path d="M1 2L12 0l6 2 4 6-2 6 3 6-9 4L2 22z" fill="#9b45e8"/><path d="M2 2l7-2 4 4-10 10z" fill="#e34fd8"/><rect x="5" y="4" width="14.500" height="15" fill="#160f24"/><text x="6" y="11.500" class="jb-text">PS</text><path d="M6.500 16.500h5" stroke="#fff" stroke-width="1.300"/></svg>
    <svg class="l4" viewBox="0 0 21 22"><rect width="21" height="22" rx="3" fill="#1e63c7"/><path d="M5 3.500q5 3 10 15.500M15.500 2Q9 8 6 19" stroke="#dfe8f5" stroke-width="3.400" fill="none"/><path d="M5 3.500q5 3 10 15.500M15.500 2Q9 8 6 19" stroke="#ef3b24" stroke-width="2.200" fill="none"/></svg>
    <svg class="l5" viewBox="0 0 22 22"><g fill="#f0f0ee" stroke="#4b4d4b" stroke-width="1.300"><circle cx="14" cy="13" r="6" stroke-width="2.500" stroke-dasharray="2.500 1.270"/><circle cx="14" cy="13" r="5"/><circle cx="14" cy="13" r="2"/><path d="M3 1.500h6.500v6.500H3zM1 13h6.500v6.500H1z"/><circle cx="6.250" cy="4.750" r="1.200"/><circle cx="4.250" cy="16.250" r="1.200"/></g></svg>
    <svg class="l6"><use href="#note"/></svg>
    <svg class="l7"><use href="#note"/></svg>
    <svg class="l8" viewBox="0 0 18 21"><rect x=".6" y=".6" width="16.800" height="19.500" rx="2" fill="#e9e9e7" stroke="#8a8c88"/><path d="M3 3.500h12v6H3zM3 11.500h12v6H3z" fill="#fafafa" stroke="#7c7e7a"/><path d="M6.500 5.500v2h5v-2M6.500 13.500v2h5v-2" fill="none" stroke="#555"/></svg>
    <svg class="l9"><use href="#terminal"/></svg>
    <svg class="l10" viewBox="0 0 24 24"><path d="M1 1l9-1 6 3-4 14-11-2z" fill="#fb3a70"/><path d="M15 1l9 6-2 13-6 4-12-4z" fill="#287ff2"/><path d="M1 12l8 4-2 6-6-3z" fill="#f98b3a"/><rect x="5" y="4" width="14.500" height="15" fill="#000"/><text x="7" y="11.500" class="jb-text">IJ</text><path d="M6.500 16.500h5" stroke="#fff" stroke-width="1.300"/></svg>
    <svg class="l11" viewBox="0 0 22 22"><path d="M0 12Q3 4 11 3q2-3 7-3-3 2-2 5 4 4 3 9l3 4-3 .5-1 2.500-3-4.500Q12 13 9 13q-3 3-9 2l2-2z" fill="#2a2c2d"/><path d="M4 12q5-2 8 1-4 3-9 2zM14 7q3 3 2 8-2-2-2-8z" fill="#e9ecec"/><ellipse cx="12" cy="20.500" rx="9" ry="1" fill="#bfc5bd"/></svg>
    <svg class="l12" viewBox="0 0 24 22"><rect width="24" height="22" rx="3" fill="#3a3a3c"/><path d="M5.500 11.500l4 5.500L18 4.500" stroke="#fff" stroke-width="3" fill="none"/></svg>
    <svg class="l13" viewBox="0 0 19 24"><g stroke="#111" stroke-width="1.200" stroke-linejoin="round"><path d="M9.500 1L18 6 9.500 12 1 6z" fill="#4d86f0"/><path d="M1 6l8.500 6v11L1 17z" fill="#e8383d"/><path d="M18 6l-8.500 6v11L18 17z" fill="#45e845"/></g></svg>
    <svg class="l14" viewBox="0 0 24 24"><path d="M3 6h6q-2-5 2-5t2 5h6v6q5-2 5 2t-5 2v7h-6q1-4-2-4t-2 4H3v-6q-3 1-3-2t3-2z" fill="#7a4f88"/></svg>
    <svg class="grip" viewBox="0 0 4 10"><path d="M0 1h4M0 4.500h4M0 8h4" stroke="#a9b5a4"/></svg>
  </div>
  <div class="tasks">
    <div class="task sel"><svg><use href="#chrome"/></svg><span>Kub...</span></div>
    <div class="task"><svg viewBox="0 0 16 16"><rect x="1" width="14.500" height="15.500" fill="#0a0a0a"/><text x="3" y="8" class="jb-text">IJ</text><path d="M3 12.500h6" stroke="#fff" stroke-width="1.400"/></svg><span>perf...</span></div>
    <div class="task"><svg><use href="#terminal"/></svg><span>chris...</span></div>
    <div class="task"><svg><use href="#terminal"/></svg><span>chris...</span></div>
    <div class="task"><svg><use href="#terminal"/></svg><span>chris...</span></div>
    <div class="task"><svg><use href="#terminal"/></svg><span>chris...</span></div>
    <div class="task"><svg viewBox="0 0 16 16"><path d="M1 1h6l1 2h7v12H1z" fill="#b59a78" stroke="#6d5638"/><rect x="2" y="5" width="12.500" height="9.500" fill="#c9b08e"/><circle cx="8" cy="9.500" r="2" fill="none" stroke="#6d5638" stroke-width="1.200"/><path d="M4.500 7v5M11.500 7v5" stroke="#6d5638"/></svg><span>Desk...</span></div>
  </div>
  <svg class="weather" viewBox="0 0 16 16"><circle cx="7" cy="6" r="5.500" fill="#f8d84a" stroke="#e6b520" stroke-width=".7"/><path d="M3 14.500a3 3 0 0 1 .5-5.500 4 4 0 0 1 7-.5 3 3 0 1 1 1.500 6z" fill="#f2f4f6" stroke="#9aa2a8" stroke-width=".8"/></svg>
  <span class="menu temp">12 °C</span><span class="menu date">Mi Mai 24, 09:19</span>
  <div class="tray">
    <svg class="grip" viewBox="0 0 4 10"><path d="M0 1h4M0 4.500h4M0 8h4" stroke="#a9b5a4"/></svg>
    <svg class="t1" viewBox="0 0 16 18"><use href="#hangouts"/></svg>
    <svg class="t2"><use href="#chrome"/></svg>
    <svg class="t3" viewBox="0 0 18 24"><rect width="18" height="24" rx="8" fill="#3d6dac"/><path d="M5 8l8 8-4 4V4l4 4-8 8" fill="none" stroke="#fff" stroke-width="1.500"/></svg>
    <svg class="t4" viewBox="0 0 20 18"><g fill="#3f64a0" stroke="#22396a" stroke-width=".8"><path d="M.5 13h4v4.500h-4zM5.500 9.500h4v8h-4zM10.500 5h4v12.500h-4zM15.500 .5h4v17h-4z"/></g></svg>
    <b>GE</b>
    <svg class="t5" viewBox="0 0 21 23"><path d="M4 1h6v2h3v17H1V3h3z" fill="#fff" stroke="#55606a"/><path d="M3 5h8v13H3z" fill="#2f62ae"/><path d="M12 10v4M17 10v4M9.500 14h10v3q0 2-2.500 2.500V22h-5v-2.500Q9.500 19 9.500 17z" fill="#eee" stroke="#888"/></svg>
  </div>
</footer>
<svg class="cursor" viewBox="0 0 13 20"><path d="M1 1v16l3.700-3.400 2.600 5.700 2.300-1-2.500-5.600H12z" fill="#fff" stroke="#111" stroke-width="1.100"/></svg>
</body>
</html>
```
FILE: styles.css
```css
* { box-sizing: border-box; }
body { margin: 0; width: 1600px; height: 900px; overflow: hidden; display: flex; flex-direction: column; background: #eee; font-family: Roboto, sans-serif; font-size: 14px; color: #212121; }
svg { display: block; flex: none; }
.defs { position: absolute; }

/* browser window */
.browser { height: 90px; flex: none; font-family: "DejaVu Sans Condensed", "DejaVu Sans", sans-serif; font-stretch: condensed; font-size: 12px; color: #000; background: linear-gradient(#fff 29px, #fcfcfc 35px, #b9bbbb 90px); }
.tabstrip { height: 29px; display: flex; padding-left: 6px; background: linear-gradient(#c0c2c4, #86888b); border-bottom: 1px solid #747678; }
.tab { display: grid; grid-template-columns: 14px 16px 5.500px 21px 1fr; width: 70px; margin-right: -13.900px; height: 29px; flex: none; align-items: center; color: #35383b; }
.tab > * { grid-row: 1; }
.tab .shape { grid-column: 1 / -1; width: 70px; height: 29px; }
.tab .fav { grid-column: 2; margin-top: 1px; }
.tab span { grid-column: 4; width: 21px; overflow: hidden; white-space: nowrap; -webkit-mask-image: linear-gradient(90deg, #000 45%, transparent 98%); mask-image: linear-gradient(90deg, #000 45%, transparent 98%); }
.tab.active { z-index: 1; }
.tab.active .fav { margin-left: 1px; }
.tab-close { grid-column: 4; width: 9px; height: 9px; margin-left: 6px; margin-top: 1px; }
.fav { width: 16px; height: 16px; }
.newtab { width: 36px; height: 18px; margin: 7px 0 0 10px; }
.wm { display: flex; margin-left: auto; padding-right: 3px; gap: 3px; }
.wm-home { width: 45px; height: 19px; margin-right: 3px; border: 1px solid #77797b; border-top: 0; border-radius: 0 0 4px 4px; background: #a0a2a4; color: #fff; font-size: 11px; line-height: 23px; text-align: center; text-shadow: 0 0 1px #333, 0 0 1px #333, 0 0 1px #333; }
.wm-btn { width: 23px; height: 18px; margin-top: 2px; border: 1px solid #d0d2d3; border-radius: 2px; background: #a7a9ab; outline: 1px solid #85878a; outline-offset: -2px; }
.db-text { font: bold 8.500px "Liberation Sans", sans-serif; fill: #e3001b; }
.doi-text { font: bold 6.500px "DejaVu Sans", sans-serif; fill: #111; }
.jb-text { font: bold 8px "Liberation Sans", sans-serif; fill: #fff; }

.toolbar { height: 34px; display: flex; align-items: center; padding: 1px 10px 0 10px; }
.nav { width: 16px; height: 16px; margin-right: 12px; }
.omnibox { width: 1188px; height: 28px; margin-left: -2px; display: flex; align-items: center; padding: 0 5px 0 6px; border: 1px solid #a2a4a6; border-radius: 3px; background: #fff; margin-top: 1px; }
.site-info { width: 14px; height: 14px; }
.url { margin-left: 6px; margin-top: -1px; font-size: 14px; color: #757575; white-space: nowrap; flex: 1; letter-spacing: -.2px; }
.url b { font-weight: normal; color: #000; }
.outline { fill: none; stroke: #505254; stroke-width: 1.300; }
.solid { fill: #505254; }
.extensions { display: flex; gap: 16px; margin-left: 10px; }
.extensions svg { width: 16px; height: 16px; }

.bookmarks { display: flex; align-items: center; height: 24px; padding: 0 14px 0 10px; }
.bm { display: flex; align-items: center; gap: 5px; margin-right: 12px; white-space: nowrap; }
.bm span { margin-top: -1px; }
.small { width: 13px; height: 13px; margin: 0 2px 0 1px; }
.w-apps { width: 26px; }
.w-books { width: 58px; }
.w-pandora { width: 44px; }
.fade { width: 117px; overflow: hidden; -webkit-mask-image: linear-gradient(90deg, #000 82%, transparent); mask-image: linear-gradient(90deg, #000 82%, transparent); }
.chevrons { width: 9px; height: 8px; margin-left: auto; }
.bm-sep { width: 1px; height: 16px; background: #9a9c9c; margin: 0 10px 0 9px; }
.bm.last { margin-right: 0; width: 113px; }

/* app bar */
.appbar { height: 56px; flex: none; background: #326de6; color: #fff; display: flex; align-items: center; padding: 0 30px 0 25px; box-shadow: 0 1px 3px rgba(0,0,0,.45); z-index: 1; }
.burger { width: 18px; height: 12px; }
.brand { width: 188px; margin-left: 25px; font: 600 20px "Noto Sans", sans-serif; letter-spacing: .3px; }
.crumbs { display: flex; align-items: center; font-size: 18px; font-weight: 500; margin-top: 3px; letter-spacing: .1px; }
.crumbs a { color: #a0bbf3; width: 99px; }
.crumbs svg { width: 8px; height: 12px; margin-right: 12px; }
.create { margin-left: auto; display: flex; align-items: center; gap: 11px; font-weight: 500; letter-spacing: .14px; }
.create svg { width: 14px; height: 14px; }

/* sidebar */
.body { flex: 1; min-height: 0; display: flex; overflow: hidden; }
.side { width: 224px; flex: none; padding-top: 8px; letter-spacing: .14px; }
.side h4 { margin: 0; height: 44px; padding-left: 24px; line-height: 44px; font-size: 14px; font-weight: 500; }
.side a { display: block; height: 32px; line-height: 32px; margin-left: 24px; padding-left: 12px; border-radius: 2px; }
.side a.on { background: #dedede; color: #326de6; }
.side hr { border: 0; border-top: 1px solid #cfcfcf; margin: 8px 0 0; }
.side label { display: block; margin: 16px 0 0 24px; font-size: 12px; line-height: 15px; color: #757575; }
.select { width: 83px; height: 34px; margin: 8px 0 10px 34px; border-bottom: 1px solid #cfcfcf; display: flex; align-items: center; justify-content: space-between; padding: 0 2px; font-weight: 500; }
.select svg { width: 9px; height: 5px; margin-top: -3px; }

/* content */
.content { flex: 1; padding: 21px 20.500px 0 36.500px; }
.charts { display: grid; grid-template-columns: 639px 659px; gap: 21px; }
.card { background: #fff; border-radius: 2px; box-shadow: 0 1px 2px rgba(0,0,0,.4), 0 0 2px rgba(0,0,0,.2); letter-spacing: .14px; }
.card h2 { margin: 0; height: 55px; padding: 0 16.500px; display: flex; align-items: center; font-size: 20px; font-weight: 400; border-bottom: 1px solid #e0e0e0; }
.charts .card h2 { height: 56px; }
.info { width: 20px; height: 20px; margin: 4px 0 0 7px; }
.chart { width: 100%; height: 201px; letter-spacing: 0; }
.chart text { font: 12px "Liberation Sans", Arial, sans-serif; fill: #000; }
.chart .b { font-weight: bold; }
.chart .rot { font-size: 11.700px; letter-spacing: .2px; }
.ylab { text-anchor: end; }
.xlab { text-anchor: middle; }
.grid { stroke: #e3e3e3; fill: none; }
.axis { stroke: #222; fill: none; }
.area-cpu { fill: #00c752; fill-opacity: .2; }
.line-cpu { stroke: #00c752; stroke-width: 3; fill: none; }
.area-mem { fill: #326de6; fill-opacity: .2; }
.line-mem { stroke: #326de6; stroke-width: 3; fill: none; }

.pods { margin-top: 21px; }
.pods h2 { height: 57px; }
.row { display: grid; grid-template-columns: 48.500px 338.500px 217px 96px 96px 217px 217px 40px 40px; height: 41px; align-items: center; border-bottom: 1px solid #e0e0e0; }
.row:last-child { height: 40.500px; padding-bottom: .5px; border-bottom: 0; }
.row a { color: #326de6; }
.row.head { height: 29px; color: #757575; }
.ic { width: 24px; height: 24px; justify-self: center; }
.metric { display: flex; align-items: center; gap: 3.500px; height: 20px; line-height: 20px; padding-top: 1px; }
.spark { width: 64px; height: 20px; margin-top: -1px; background: #eee; }
.spark.cpu { fill: #00c752; }
.spark.mem { fill: #326de6; }

/* desktop panel */
.panel { height: 25px; flex: none; display: flex; align-items: center; padding-left: 8px; background: #e8efe5; font-family: "DejaVu Sans Condensed", "DejaVu Sans", sans-serif; font-stretch: condensed; font-size: 12px; color: #111; }
.mate { width: 22px; height: 22px; margin-right: 6px; }
.menu { white-space: nowrap; flex: none; padding-top: 1px; }
.m1 { width: 79px; }
.m2 { width: 47px; }
.m3 { width: 91px; }
.launchers { display: flex; align-items: center; width: 492px; flex: none; }
.l1 { width: 23px; height: 24px; }
.l2 { width: 22px; height: 22px; margin-left: 19px; }
.l3 { width: 23px; height: 24px; margin-left: 11px; }
.l4 { width: 21px; height: 22px; margin-left: 20px; }
.l5 { width: 22px; height: 22px; margin-left: 11px; }
.l6 { width: 16px; height: 15px; margin-left: 25px; }
.l7 { width: 16px; height: 15px; margin-left: 26px; }
.l8 { width: 18px; height: 21px; margin-left: 21px; }
.l9 { width: 22px; height: 20px; margin-left: 14px; }
.l10 { width: 23px; height: 24px; margin-left: 12px; }
.l11 { width: 22px; height: 22px; margin-left: 11px; }
.l12 { width: 24px; height: 22px; margin-left: 6px; }
.l13 { width: 19px; height: 24px; margin-left: 2px; }
.l14 { width: 24px; height: 24px; margin-left: 7px; }
.grip { width: 4px; height: 10px; margin-left: 5px; }
.tasks { display: flex; width: 499px; flex: none; }
.task { width: 70.200px; height: 24px; margin-right: .8px; display: flex; align-items: center; gap: 7px; padding-left: 6px; border: 1px solid #a7b5a2; border-radius: 3px; background: linear-gradient(#f6f9f4, #c8d6c2); white-space: nowrap; }
.task svg { width: 16px; height: 16px; }
.task.sel { background: linear-gradient(#c4d8bd, #a9c19f); border-color: #93a98b; }
.weather { width: 16px; height: 16px; margin-left: 3px; }
.temp { width: 43px; margin-left: 1px; }
.date { width: 130px; letter-spacing: .12px; }
.tray { display: flex; align-items: center; }
.t1 { width: 19px; height: 22px; margin-left: 4px; }
.t2 { width: 21px; height: 21px; margin-left: 3px; }
.t3 { width: 18px; height: 24px; margin-left: 6px; }
.t4 { width: 20px; height: 18px; margin-left: 8px; }
.tray b { width: 24px; margin-left: 8px; color: #4a4d92; font-family: "DejaVu Sans", sans-serif; font-size: 12px; letter-spacing: -1px; }
.t5 { width: 20px; height: 23px; }

.cursor { position: absolute; left: 781px; top: 384px; width: 13px; height: 20px; }
```
